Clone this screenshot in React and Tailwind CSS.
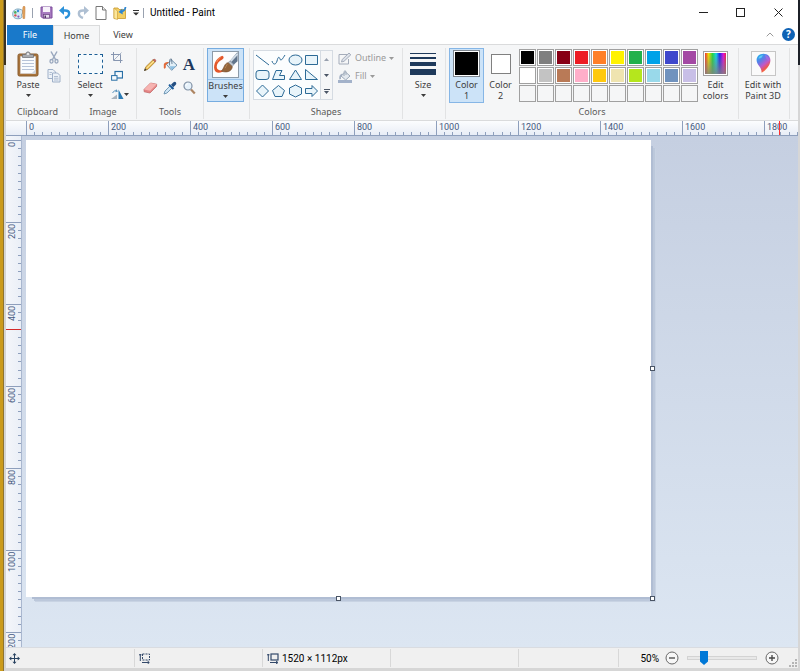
import React, { useState } from 'react';
import clsx from 'clsx';

const PALETTE = [
  '#000000', '#7f7f7f', '#880015', '#ed1c24', '#ff7f27', '#fff200', '#22b14c', '#00a2e8', '#3f48cc', '#a349a4',
  '#ffffff', '#c3c3c3', '#b97a57', '#ffaec9', '#ffc90e', '#efe4b0', '#b5e61d', '#99d9ea', '#7092be', '#c8bfe7',
  null, null, null, null, null, null, null, null, null, null,
];

const H_MARKS = [0, 200, 400, 600, 800, 1000, 1200, 1400, 1600, 1800];
const V_MARKS = [0, 200, 400, 600, 800, 1000, 1200];

const SHAPES = [
  { name: 'Line', d: 'M1 2 L14 12' },
  { name: 'Curve', d: 'M1 8 C2 12 5 12 6 8 C7 4 8 3 9 6 C10 9 12 5 14 2' },
  { name: 'Oval', d: 'M1 7 a6.5 5 0 1 0 13 0 a6.5 5 0 1 0 -13 0' },
  { name: 'Rectangle', d: 'M1.5 2.5 H13.5 V11.5 H1.5 Z' },
  { name: 'Rounded rectangle', d: 'M4 2.5 H11 Q14 2.5 14 5 V9 Q14 11.5 11 11.5 H4 Q1 11.5 1 9 V5 Q1 2.5 4 2.5 Z' },
  { name: 'Polygon', d: 'M1.5 11.5 L5 2.5 H11 L8.5 7.5 H13.5 V11.5 Z' },
  { name: 'Triangle', d: 'M7.5 2 L13.5 11.5 H1.5 Z' },
  { name: 'Right triangle', d: 'M1.5 1.5 V11.5 H13.5 Z' },
  { name: 'Diamond', d: 'M7.5 1 L13.5 7 L7.5 13 L1.5 7 Z' },
  { name: 'Pentagon', d: 'M7.5 1.5 L13.5 6.5 L11 12.5 H4 L1.5 6.5 Z' },
  { name: 'Hexagon', d: 'M7.5 1 L13.5 4 V10 L7.5 13 L1.5 10 V4 Z' },
  { name: 'Right arrow', d: 'M1.5 4.5 H8 V1.5 L13.5 7 L8 12.5 V9.5 H1.5 Z' },
];

function Arrow({ className }) {
  return (
    <svg width="5" height="3" viewBox="0 0 5 3" className={className}>
      <path d="M0 0 H5 L2.5 3 Z" fill="currentColor" />
    </svg>
  );
}

function PaintLogo() {
  return (
    <svg width="14" height="14" viewBox="0 0 14 14">
      <path d="M6 3 C2 3 .5 6 .7 8.5 C1 12 4 13 7 12.7 C9.5 12.5 10.5 11 9.5 9.5 C9 8 11 7.5 11 6 C11 4 8.5 3 6 3 Z" fill="#d5e9f5" stroke="#7ba6bd" />
      <circle cx="3.3" cy="6.4" r="1.3" fill="#4fae5b" />
      <circle cx="6" cy="5" r="1.2" fill="#3a8ed8" />
      <circle cx="3.4" cy="9.4" r="1.2" fill="#e04f4b" />
      <circle cx="6.4" cy="10.6" r="1.1" fill="#8a59ba" />
      <path d="M10.5 5 L11 .8 L12 0 L13 .8 L13 5 L12.7 12.5 H11 Z" fill="#e2a35c" stroke="#c07c3c" strokeWidth=".5" />
    </svg>
  );
}

function SaveIcon() {
  return (
    <svg width="13" height="13" viewBox="0 0 13 13">
      <path d="M1 1 H12 V12 H2.5 L1 10.5 Z" fill="#a77bc0" stroke="#7d4d9c" />
      <rect x="3" y="1" width="7" height="5" fill="#f7f2fa" />
      <rect x="3.5" y="8.5" width="6" height="3.5" fill="#e6deed" stroke="#67417f" strokeWidth=".7" />
      <rect x="4.5" y="9.5" width="1.5" height="2.5" fill="#55356b" />
    </svg>
  );
}

function UndoIcon({ color, flip }) {
  return (
    <svg width="12" height="13" viewBox="0 0 12 13" className={clsx(flip && '-scale-x-100')}>
      <path d="M3 4.5 H6 C11.5 4.5 11.5 10 6 12" fill="none" stroke={color} strokeWidth="2.4" />
      <path d="M0 4.5 L5 0 V9 Z" fill={color} />
    </svg>
  );
}

function NewIcon() {
  return (
    <svg width="12" height="14" viewBox="0 0 12 14">
      <path d="M1 .5 H7.5 L11 4 V13.5 H1 Z" fill="#fff" stroke="#777" />
      <path d="M7.5 .5 V4 H11" fill="#eee" stroke="#777" />
    </svg>
  );
}

function OpenIcon() {
  return (
    <svg width="14" height="14" viewBox="0 0 14 14">
      <path d="M1 2 H5 L6 3.5 H12.5 V12.5 H1 Z" fill="#f3cf63" stroke="#c99a2e" strokeWidth=".8" />
      <path d="M1 2 L4.5 5 V13.5 L1 12.5 Z" fill="#fbe69b" stroke="#c99a2e" strokeWidth=".6" />
      <path d="M12.5 1 Q12 5 8.5 5.5" fill="none" stroke="#2d86d2" strokeWidth="1.8" />
      <path d="M5.5 6 L9.2 2.6 L9.8 8.4 Z" fill="#2d86d2" />
    </svg>
  );
}

function PasteIcon() {
  return (
    <svg width="22" height="26" viewBox="0 0 22 26">
      <rect x="1" y="3" width="20" height="22" rx="1.5" fill="#a8743c" stroke="#8a5c2c" />
      <path d="M3.5 5.5 H18.5 V22.5 H3.5 Z" fill="#fafcfe" stroke="#d5dbe4" strokeWidth=".5" />
      <path d="M5 9.5 H17 M5 12.5 H17 M5 15.5 H17 M5 18.5 H17" stroke="#b8c4d8" />
      <path d="M14.5 22.5 L18.5 18.5 V22.5 Z" fill="#cfd6df" />
      <path d="M5.5 6.5 V3.5 H8.5 Q9 .8 11 .8 Q13 .8 13.5 3.5 H16.5 V6.5 Z" fill="#a9abaf" stroke="#6b6d72" strokeWidth=".7" />
      <circle cx="11" cy="3" r=".9" fill="#fff" />
    </svg>
  );
}

function CutIcon() {
  return (
    <svg width="10" height="13" viewBox="0 0 10 13" fill="none" stroke="#9aa8be">
      <path d="M2 .5 L6.8 9 M8 .5 L3.2 9" strokeWidth="1.5" />
      <ellipse cx="2.5" cy="10.3" rx="1.5" ry="1.8" strokeWidth="1.3" />
      <ellipse cx="7.5" cy="10.3" rx="1.5" ry="1.8" strokeWidth="1.3" />
    </svg>
  );
}

function CopyIcon() {
  return (
    <svg width="14" height="14" viewBox="0 0 14 14" fill="#edf2f8" stroke="#9fb0c8">
      <path d="M1 .5 H6 L8.5 3 V9.5 H1 Z" />
      <path d="M5.5 4 H10.5 L13 6.5 V13 H5.5 Z" />
      <path d="M2.5 3.5 H5 M2.5 5.5 H4.5 M7 7.5 H11 M7 9.2 H11.5 M7 11 H11.5" strokeWidth=".8" />
    </svg>
  );
}

function CropIcon() {
  return (
    <svg width="12" height="11" viewBox="0 0 12 11" fill="none" stroke="#8796b0">
      <path d="M2.5 0 V8.5 H11.5 M0 2.5 H9.5 V11" />
      <path d="M3 8 L10.5 .5" strokeWidth=".7" />
    </svg>
  );
}

function ResizeIcon() {
  return (
    <svg width="12" height="12" viewBox="0 0 12 12" fill="#f5fafd" stroke="#286fa6">
      <rect x="4" y="1.5" width="7.5" height="6.5" strokeWidth="1.2" />
      <rect x=".6" y="5.6" width="5.4" height="4.6" />
    </svg>
  );
}

function RotateIcon() {
  return (
    <svg width="13" height="11" viewBox="0 0 13 11">
      <path d="M0 10 L6 5.5 V10 Z" fill="#a8b2bc" />
      <path d="M7.5 0.5 L12.5 10 H7.5 Z" fill="#2a7ab4" />
      <path d="M1.5 4 Q3 .8 6 1.8" fill="none" stroke="#5c94be" />
      <path d="M5 0 L7 2.5 L4.5 3.3 Z" fill="#5c94be" />
    </svg>
  );
}

function PencilIcon() {
  return (
    <svg width="14" height="14" viewBox="0 0 14 14">
      <path d="M1.5 12.5 L2.8 8.8 L10 1.8 L12.2 4 L5 11.2 Z" fill="#f0c35a" stroke="#a98032" strokeWidth=".8" />
      <path d="M10 1.8 Q11 .5 12.5 1.7 Q13.6 3 12.2 4 Z" fill="#d9685d" stroke="#8e5048" strokeWidth=".5" />
      <path d="M3.8 10 L11 3" stroke="#fae7a7" />
      <path d="M1 13 L2 10.3 L3.7 12 Z" fill="#3a3a3a" />
    </svg>
  );
}

function BucketIcon() {
  return (
    <svg width="15" height="14" viewBox="0 0 15 14">
      <path d="M3.5 6.5 L8.5 2 L14 7.2 L8.7 12.3 Z" fill="#e2eff7" stroke="#587e9d" strokeWidth=".9" />
      <path d="M6.5 8.2 H13 L8.7 12 Z" fill="#8fc0e2" />
      <path d="M6.5 7.5 V2.5 Q6.8 .5 8.5 1 L9 6" fill="none" stroke="#637b92" strokeWidth=".9" />
      <path d="M6 4 Q1.3 3.5 .8 6.5 V10 Q1.8 11.5 2.8 9.5 V7 Z" fill="#e36a38" />
    </svg>
  );
}

function EraserIcon() {
  return (
    <svg width="15" height="12" viewBox="0 0 15 12">
      <path d="M1 7.5 L7.5 1 L13.7 2.2 L13.5 4.5 L7 11 L1.2 9.8 Z" fill="#e68686" stroke="#bd6262" strokeWidth=".7" />
      <path d="M1 7.5 L7.5 1 L13.7 2.2 L7.2 8.8 Z" fill="#f6b3b1" />
    </svg>
  );
}

function PickerIcon() {
  return (
    <svg width="14" height="14" viewBox="0 0 14 14">
      <path d="M1 13 L2 10 L7 5 L9 7 L4 12 Z" fill="#cfe5f5" stroke="#5b87a8" strokeWidth=".8" />
      <path d="M8 3.8 L10.2 1.5 Q12 .2 13 1.5 Q14 3 12.3 4.3 L10.2 6.2 Z" fill="#244f82" />
      <path d="M6 3.6 L10.5 8" stroke="#1c5c9c" strokeWidth="2" />
    </svg>
  );
}

function MagnifierIcon() {
  return (
    <svg width="13" height="14" viewBox="0 0 13 14">
      <path d="M8 8.5 L11.8 12.5" stroke="#ad8562" strokeWidth="2.2" />
      <circle cx="5" cy="5" r="4" fill="#e6f2fb" stroke="#8191a5" strokeWidth="1.2" />
      <path d="M2.7 5 Q3 2.8 5 2.6" fill="none" stroke="#fff" />
    </svg>
  );
}

function BrushIcon() {
  return (
    <svg width="27" height="27" viewBox="0 0 27 27" className="border border-[#8c9ba9]">
      <rect width="27" height="27" fill="#fcfdfe" />
      <path d="M10 4 C12 5 12 7 10 8 C6 10 4 13 4 16 C4 20 8 20.5 13 19.5 C9 23 3 24 1.5 19 C0 13 4 6 10 4 Z" fill="#e3572b" />
      <path d="M8 5.5 Q5 8 4 11" stroke="#f08a5c" strokeWidth="1.2" fill="none" />
      <path d="M18 10 L26.5 0 V10 L22 14 Z" fill="#60758c" />
      <path d="M19 10 L26.5 2" stroke="#d1dce6" strokeWidth="2" />
      <path d="M16.3 11.5 L18.3 9.5 L22.6 13.6 L20.8 15.6 Z" fill="#bbc5cf" stroke="#75818e" strokeWidth=".5" />
      <path d="M16.3 11.5 C12 12 12 18 9 20.5 C14 23 21 21 20.8 15.6 Z" fill="#94653b" stroke="#70492a" strokeWidth=".6" />
      <path d="M15.5 13 Q14 15.5 13 17.5" stroke="#b98a5d" fill="none" />
    </svg>
  );
}

function OutlineIcon() {
  return (
    <svg width="14" height="13" viewBox="0 0 14 13" fill="none" stroke="#a4acba">
      <path d="M9 2.5 H1 V12 H10.5 V7" />
      <path d="M3.5 10 L4.2 7.5 L11 1 L12.8 2.8 L6 9.3 Z" fill="#dde2ea" />
    </svg>
  );
}

function FillIcon() {
  return (
    <svg width="14" height="13" viewBox="0 0 14 13">
      <rect x="0" y="10" width="14" height="3" fill="#a3b2ca" />
      <path d="M3 6 L7.5 2 L12 6 L7.7 10 Z" fill="#e4e9ef" stroke="#9eaab9" />
      <path d="M6 6 V1.5 Q7 0 8 1.5 V5" fill="none" stroke="#9eaab9" />
      <path d="M5 3.5 Q.5 4 1.3 9.5 L3 9 V6 Z" fill="#a6b2c4" />
    </svg>
  );
}

function SpectrumIcon() {
  return (
    <svg width="25" height="25" viewBox="0 0 25 25" className="border border-[#a0a0a0] bg-white p-px">
      <defs>
        <linearGradient id="hue">
          <stop offset="0" stopColor="#f03030" />
          <stop offset=".17" stopColor="#f5e000" />
          <stop offset=".36" stopColor="#20d840" />
          <stop offset=".53" stopColor="#10d8e8" />
          <stop offset=".7" stopColor="#2020f0" />
          <stop offset=".87" stopColor="#e010e0" />
          <stop offset="1" stopColor="#f02040" />
        </linearGradient>
        <linearGradient id="fade" x1="0" y1="0" x2="0" y2="1">
          <stop offset="0" stopColor="#808080" stopOpacity="0" />
          <stop offset="1" stopColor="#808080" stopOpacity=".85" />
        </linearGradient>
      </defs>
      <rect width="25" height="25" fill="url(#hue)" />
      <rect width="25" height="25" fill="url(#fade)" />
    </svg>
  );
}

function Paint3DIcon() {
  return (
    <svg width="25" height="25" viewBox="0 0 25 25" className="border border-[#c6c6c6] bg-[#fafafa]">
      <defs>
        <linearGradient id="drop" x1=".1" y1="0" x2=".7" y2="1">
          <stop offset="0" stopColor="#19b5ee" />
          <stop offset=".35" stopColor="#5b7de8" />
          <stop offset=".6" stopColor="#bf58c9" />
          <stop offset=".8" stopColor="#f0574e" />
          <stop offset="1" stopColor="#f9b32e" />
        </linearGradient>
      </defs>
      <path d="M12.5 2 C8 2 5 5 5 9 C5 14 10.5 16 10.5 22.5 C14 21 20 15 20 9 C20 5 17 2 12.5 2 Z" fill="url(#drop)" />
      <path d="M7 7 Q8 3.5 12 3.5 Q10 8 7 7 Z" fill="#6be0f5" opacity=".7" />
      <path d="M14 3 Q19 5 18.5 10 Q15 8 14 3 Z" fill="#a46be2" opacity=".8" />
    </svg>
  );
}

function Group({ label, className, children }) {
  return (
    <section className={clsx('flex shrink-0 flex-col border-r border-[#e2e3e4]', className)}>
      <div className="flex h-[57px] items-start">{children}</div>
      {label && <div className="pt-[2px] text-center leading-[14px] text-[#5a5a5a]">{label}</div>}
    </section>
  );
}

function BigButton({ icon, label, className, arrow = true }) {
  return (
    <button className={clsx('flex flex-col items-center', className)}>
      <span className="flex h-[31px] items-center">{icon}</span>
      <span className="leading-[11px]">{label}</span>
      {arrow && <Arrow className="mt-1" />}
    </button>
  );
}

function IconButton({ label, children }) {
  return (
    <button aria-label={label} className="flex items-center justify-center">
      {children}
    </button>
  );
}

function TitleBar() {
  return (
    <header className="flex h-[25px] shrink-0 items-center bg-white">
      <div className="flex items-center pl-[6px]">
        <PaintLogo />
        <span className="ml-[6px] h-[10px] w-px bg-gray-400" />
        <div className="ml-[7px] flex items-center gap-[6px]">
          <IconButton label="Save"><SaveIcon /></IconButton>
          <IconButton label="Undo"><UndoIcon color="#2b91d9" /></IconButton>
          <IconButton label="Redo"><UndoIcon color="#aebfd2" flip /></IconButton>
          <IconButton label="New"><NewIcon /></IconButton>
          <IconButton label="Open"><OpenIcon /></IconButton>
          <IconButton label="Customize Quick Access Toolbar">
            <svg width="6" height="6" viewBox="0 0 6 6">
              <path d="M0 0 H6 V1 H0 Z M0 2.5 H6 L3 5.5 Z" fill="#333" />
            </svg>
          </IconButton>
        </div>
        <span className="ml-1 h-[10px] w-px bg-gray-400" />
      </div>
      <h1 className="ml-[6px] font-[Roboto,sans-serif] text-[10px] text-black">Untitled - Paint</h1>
      <div className="ml-auto flex h-full pr-px">
        <button aria-label="Minimize" className="flex w-[37px] items-center justify-center">
          <svg width="9" height="9" viewBox="0 0 9 9"><path d="M0 4.5 H9" stroke="#222" /></svg>
        </button>
        <button aria-label="Maximize" className="flex w-[37px] items-center justify-center">
          <svg width="9" height="9" viewBox="0 0 9 9"><rect x=".5" y=".5" width="8" height="8" fill="none" stroke="#222" /></svg>
        </button>
        <button aria-label="Close" className="flex w-[38px] items-center justify-center">
          <svg width="9" height="9" viewBox="0 0 9 9"><path d="M.5 .5 L8.5 8.5 M8.5 .5 L.5 8.5" stroke="#222" /></svg>
        </button>
      </div>
    </header>
  );
}

function Tabs() {
  return (
    <nav className="flex h-[20px] shrink-0 bg-white">
      <button className="w-[47px] border-l border-white bg-[#1979ca] text-white">File</button>
      <button className="w-[47px] border-x border-t border-[#dadbdc] bg-[#f5f6f7]">Home</button>
      <button className="w-[46px] border-b border-[#dadbdc]">View</button>
      <div className="flex flex-1 items-center justify-end gap-2 border-b border-[#dadbdc] pr-[3px]">
        <IconButton label="Minimize the Ribbon">
          <svg width="8" height="5" viewBox="0 0 8 5"><path d="M.7 4.3 L4 1 L7.3 4.3" fill="none" stroke="#999" /></svg>
        </IconButton>
        <button aria-label="Help" className="h-[13px] w-[13px] rounded-full bg-[#0f62b4] text-[10px] leading-[13px] font-bold text-white">?</button>
      </div>
    </nav>
  );
}

function ShapeGallery() {
  return (
    <div className="flex h-[50px] border border-[#d5dbe2] bg-[#fbfdfe]">
      <div className="grid w-[66px] grid-cols-4 content-evenly justify-items-center">
        {SHAPES.map((s) => (
          <button key={s.name} aria-label={s.name}>
            <svg width="15" height="14" viewBox="0 0 15 14">
              <path d={s.d} fill={s.name === 'Line' || s.name === 'Curve' ? 'none' : '#e8f4fa'} stroke="#2c6a96" />
            </svg>
          </button>
        ))}
      </div>
      <div className="grid w-[12px] grid-rows-3 border-l border-[#d5dbe2] bg-[#f5f6f7]">
        <IconButton label="Scroll up"><Arrow className="rotate-180 text-gray-400" /></IconButton>
        <IconButton label="Scroll down"><Arrow className="text-gray-600" /></IconButton>
        <button aria-label="More shapes" className="flex flex-col items-center justify-center gap-px">
          <span className="h-px w-[6px] bg-gray-600" />
          <Arrow className="text-gray-600" />
        </button>
      </div>
    </div>
  );
}

function Ribbon() {
  return (
    <div className="flex h-[75px] shrink-0 overflow-hidden bg-[#f5f6f7] pt-[3px] pb-px text-[#3c3c3c]">
      <Group label="Clipboard" className="w-[64px]">
        <BigButton label="Paste" icon={<PasteIcon />} className="ml-[5px] w-[34px]" />
        <div className="ml-[2px] flex flex-col items-center gap-[5px] pt-[3px]">
          <IconButton label="Cut"><CutIcon /></IconButton>
          <IconButton label="Copy"><CopyIcon /></IconButton>
        </div>
      </Group>

      <Group label="Image" className="w-[67px]">
        <BigButton
          label="Select"
          icon={<span className="h-[20px] w-[25px] border border-dashed border-[#1d5f96] bg-[#f5fafd]" />}
          className="ml-1 w-[32px]"
        />
        <div className="ml-[5px] flex flex-col items-start gap-[7px] pt-1">
          <IconButton label="Crop"><CropIcon /></IconButton>
          <IconButton label="Resize"><ResizeIcon /></IconButton>
          <button aria-label="Rotate" className="flex items-center"><RotateIcon /><Arrow /></button>
        </div>
      </Group>

      <Group label="Tools" className="w-[67px]">
        <div className="grid grid-cols-[20px_20px_18px] grid-rows-[23px_23px] pt-[5px] pl-[3px]">
          <IconButton label="Pencil"><PencilIcon /></IconButton>
          <IconButton label="Fill with color"><BucketIcon /></IconButton>
          <button aria-label="Text" className="font-['Liberation_Serif',serif] text-[17px] leading-[23px] font-bold text-[#1f3a5f]">A</button>
          <IconButton label="Eraser"><EraserIcon /></IconButton>
          <IconButton label="Color picker"><PickerIcon /></IconButton>
          <IconButton label="Magnifier"><MagnifierIcon /></IconButton>
        </div>
      </Group>

      <Group className="w-[46px]">
        <button className="ml-[3px] flex h-[54px] w-[37px] flex-col items-center border border-[#76ace0] bg-[#cce3f8] pt-[2px]">
          <BrushIcon />
          <span className="mt-px w-full border-t border-[#9cc4ea] leading-[12px]">Brushes</span>
          <Arrow className="mt-[3px]" />
        </button>
      </Group>

      <Group label="Shapes" className="w-[153px]">
        <div className="pt-[2px] pl-[3px]"><ShapeGallery /></div>
        <div className="ml-[5px] flex flex-col gap-1 pt-[3px] text-[#9a9a9a]">
          <button className="flex items-center gap-[3px] leading-[14px]"><OutlineIcon />Outline<Arrow /></button>
          <button className="flex items-center gap-[3px] leading-[14px]"><FillIcon />Fill<Arrow /></button>
        </div>
      </Group>

      <Group className="w-[43px]">
        <BigButton
          label="Size"
          icon={
            <span className="flex w-[26px] flex-col gap-[3px]">
              <span className="h-px bg-[#1e395b]" />
              <span className="h-[2px] bg-[#1e395b]" />
              <span className="h-[4px] bg-[#1e395b]" />
              <span className="h-[6px] bg-[#1e395b]" />
            </span>
          }
          className="ml-[3px] w-[34px]"
        />
      </Group>

      <Group label="Colors" className="w-[293px]">
        <button className="ml-[3px] flex h-[55px] w-[35px] flex-col items-center border border-[#86b6e6] bg-[#cce3f8] pt-px leading-[11px]">
          <span className="mb-[2px] h-[27px] w-[27px] border border-[#7f8790] bg-white p-px">
            <span className="block h-full bg-black" />
          </span>
          <span>Color<br />1</span>
        </button>
        <button className="flex w-[33px] flex-col items-center pt-[6px] leading-[11px]">
          <span className="mb-[5px] h-[20px] w-[20px] border border-[#808080] bg-white" />
          <span>Color<br />2</span>
        </button>
        <div className="ml-[2px] grid grid-cols-10 gap-px pt-px">
          {PALETTE.map((color, i) => (
            <button
              key={i}
              aria-label={color ? `Color ${color}` : 'Empty color'}
              className={clsx('h-[17px] w-[17px] border border-[#a0a0a0] p-px', color && 'bg-white')}
            >
              {color && <span className="block h-full" style={{ backgroundColor: color }} />}
            </button>
          ))}
        </div>
        <BigButton label={<>Edit<br />colors</>} icon={<SpectrumIcon />} arrow={false} className="w-[35px]" />
      </Group>

      <Group className="w-[51px]">
        <BigButton label={<>Edit with<br />Paint 3D</>} icon={<Paint3DIcon />} arrow={false} className="w-[48px]" />
      </Group>
    </div>
  );
}

function HorizontalRuler() {
  return (
    <div className="relative flex h-[16px] shrink-0 overflow-hidden border-t border-b border-t-[#dadbdc] border-b-[#8e9fbc] bg-linear-to-b from-[#fcfdfe] to-[#e8edf6] pl-[20px]">
      {H_MARKS.map((mark) => (
        <div key={mark} className="flex w-[82px] shrink-0 flex-col border-l border-[#8e9fbc]">
          <span className="h-[11px] pl-[2px] font-[Roboto,sans-serif] text-[9px] leading-[13px] text-[#44597f]">{mark}</span>
          <div className="flex h-[3px]">
            {[0, 1, 2, 3, 4, 5, 6, 7, 8, 9].map((n) => (
              <span key={n} className={clsx('flex-1', n > 0 && 'border-l border-[#8e9fbc]')} />
            ))}
          </div>
        </div>
      ))}
      <div className="absolute inset-y-0 left-[773px] border-l border-[#ff3030]" />
    </div>
  );
}

function VerticalRuler() {
  return (
    <div className="relative flex w-[16px] shrink-0 flex-col overflow-hidden border-r border-[#a9b7cf] bg-linear-to-r from-[#f4f6fa] to-[#eaeff7] pt-1">
      {V_MARKS.map((mark) => (
        <div key={mark} className="flex h-[82px] shrink-0 border-t border-[#8e9fbc]">
          <span className="w-[12px] rotate-180 pb-px text-right font-[Roboto,sans-serif] text-[9px] leading-[12px] text-[#44597f] [writing-mode:vertical-rl]">
            {mark}
          </span>
          <div className="flex w-[3px] flex-col">
            {[0, 1, 2, 3, 4, 5, 6, 7, 8, 9].map((n) => (
              <span key={n} className={clsx('flex-1', n > 0 && 'border-t border-[#8e9fbc]')} />
            ))}
          </div>
        </div>
      ))}
      <div className="absolute inset-x-0 top-[193px] border-t border-[#d42a2a]" />
    </div>
  );
}

function Workspace() {
  return (
    <main className="flex-1 overflow-hidden bg-linear-to-b from-[#c5cfe1] to-[#dce6f2] pt-1 pl-1">
      <div className="relative h-[457px] w-[625px]">
        <div className="absolute top-1 right-0 bottom-0 left-1 shadow-[2px_2px_0_#b0bdd3,4px_4px_0_#bcc8db,5px_5px_0_#c8d3e3]" />
        <div className="relative h-full bg-white" />
        <div className="absolute inset-y-0 -right-1 flex items-center">
          <span className="h-[5px] w-[5px] border border-gray-600 bg-white" />
        </div>
        <div className="absolute inset-x-0 -bottom-1 flex justify-center">
          <span className="h-[5px] w-[5px] border border-gray-600 bg-white" />
        </div>
        <span className="absolute -right-1 -bottom-1 h-[5px] w-[5px] border border-gray-600 bg-white" />
      </div>
    </main>
  );
}

function StatusBar() {
  const [zoom, setZoom] = useState(20);

  return (
    <footer className="flex h-[21px] shrink-0 items-stretch border-t border-[#d9dce1] bg-[#f0f0f0] py-px font-[Roboto,sans-serif] text-[10px] text-black">
      <div className="flex w-[129px] items-center border-r border-[#d8d8d8] pl-[3px]">
        <svg width="11" height="11" viewBox="0 0 11 11" stroke="#27415f" fill="#27415f">
          <path d="M5.5 1 V10 M1 5.5 H10" />
          <path d="M5.5 0 L7.5 2.3 H3.5 Z M5.5 11 L7.5 8.7 H3.5 Z M0 5.5 L2.3 3.5 V7.5 Z M11 5.5 L8.7 3.5 V7.5 Z" stroke="none" />
        </svg>
      </div>
      <div className="flex w-[128px] items-center border-r border-[#d8d8d8] pl-1">
        <svg width="11" height="11" viewBox="0 0 11 11" fill="none" stroke="#33496a">
          <rect x="3.5" y="1" width="7" height="6" strokeDasharray="2 1" />
          <path d="M1.3 1 V8 M0 1.8 H2.5 M3 9.5 H10 M8.5 8 L10.3 9.5 L8.5 11" />
        </svg>
      </div>
      <div className="flex w-[128px] items-center gap-[3px] border-r border-[#d8d8d8] pl-1">
        <svg width="12" height="11" viewBox="0 0 12 11" fill="none" stroke="#33496a">
          <rect x="4" y="1" width="7" height="6" strokeWidth="1.2" />
          <path d="M1.3 1 V8 M0 1.8 H2.5 M3 9.5 H10.5 M9 8 L11 9.5 L9 11" />
        </svg>
        <span>1520 × 1112px</span>
      </div>
      <div className="w-[128px] border-r border-[#d8d8d8]" />
      <div className="flex-1 border-r border-[#d8d8d8]" />
      <div className="flex w-[179px] items-center justify-end">
        <label htmlFor="zoom" className="mr-[6px]">50%</label>
        <ZoomButton label="Zoom out" d="M4 7 H10" />
        <input
          id="zoom"
          type="range"
          value={zoom}
          onChange={(e) => setZoom(e.target.value)}
          className="mx-2 h-[14px] w-[70px] appearance-none bg-transparent [&::-webkit-slider-runnable-track]:h-1 [&::-webkit-slider-runnable-track]:border [&::-webkit-slider-runnable-track]:border-[#d3d3d3] [&::-webkit-slider-runnable-track]:bg-[#e8e8e8] [&::-webkit-slider-thumb]:-mt-[6px] [&::-webkit-slider-thumb]:h-[14px] [&::-webkit-slider-thumb]:w-2 [&::-webkit-slider-thumb]:appearance-none [&::-webkit-slider-thumb]:bg-[#0078d7] [&::-webkit-slider-thumb]:[clip-path:polygon(0_0,100%_0,100%_75%,50%_100%,0_75%)]"
        />
        <ZoomButton label="Zoom in" d="M4 7 H10 M7 4 V10" />
        <svg width="8" height="8" viewBox="0 0 8 8" className="mr-px ml-[10px] self-end" fill="#b5b5b5">
          <path d="M6 0 h2 v2 h-2 Z M6 3 h2 v2 h-2 Z M6 6 h2 v2 h-2 Z M3 3 h2 v2 h-2 Z M3 6 h2 v2 h-2 Z M0 6 h2 v2 h-2 Z" />
        </svg>
      </div>
    </footer>
  );
}

function ZoomButton({ label, d }) {
  return (
    <IconButton label={label}>
      <svg width="14" height="14" viewBox="0 0 14 14">
        <circle cx="7" cy="7" r="6" fill="#f7f7f7" stroke="#686868" />
        <path d={d} stroke="#444" strokeWidth="1.3" />
      </svg>
    </IconButton>
  );
}

export default function App() {
  return (
    <div className="flex h-screen overflow-hidden bg-[#d6d6d6] font-['Noto_Sans',sans-serif] text-[9px] text-[#3c3c3c]">
      {/* desktop showing on the left of the window */}
      <div className="flex w-[6px] shrink-0">
        <div className="w-[3px] bg-[#cb9b1b]" />
        <div className="flex flex-1 flex-col border-l border-[#8f7430] bg-[#d5d5d3]">
          <div className="h-[65px] bg-[#3b3220]" />
        </div>
      </div>
      <div className="flex min-w-0 flex-1 flex-col pb-[3px]">
        <TitleBar />
        <Tabs />
        <Ribbon />
        <HorizontalRuler />
        <div className="flex min-h-0 flex-1">
          <VerticalRuler />
          <Workspace />
        </div>
        <StatusBar />
      </div>
      <div className="w-[2px] shrink-0">
        <div className="h-[65px] bg-[#1c2028]" />
      </div>
    </div>
  );
}
